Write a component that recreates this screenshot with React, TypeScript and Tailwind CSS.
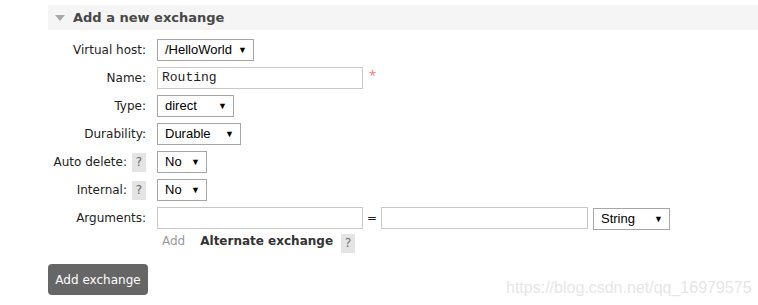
const label = 'font-["DejaVu_Sans",Verdana,sans-serif] text-[12px] text-[#222]'

function Select({ value, width }: { value: string; width: string }) {
  return (
    <div className={`${width} h-[22px] border border-[#a6a6a6] bg-white flex items-center justify-between pl-[7px] pr-[6px] font-["Liberation_Sans",Arial,sans-serif] text-[13px] text-black`}>
      <span>{value}</span>
      <span className="text-[9px] leading-none">▼</span>
    </div>
  )
}

function Help() {
  return (
    <span className="inline-flex items-center justify-center w-[14px] h-[19px] bg-[#e4e4e4] text-[#666] ml-[5px] text-[12px]">?</span>
  )
}

function Row({ name, help, children }: { name: string; help?: boolean; children: React.ReactNode }) {
  return (
    <div className="flex items-center h-[28px]">
      <div className={`w-[98px] flex items-center justify-end ${label}`}>
        <span>{name}</span>
        {help && <Help />}
      </div>
      <div className="ml-[11px] flex items-center">{children}</div>
    </div>
  )
}

export default function App() {
  return (
    <div className="w-[758px] h-[305px] bg-white relative overflow-hidden">
      <div className="pl-[48px] pt-[5px]">
        <div className="h-[25px] bg-[#f5f5f5] flex items-center">
          <span className="ml-[7px] w-0 h-0 border-l-[5px] border-r-[5px] border-t-[6px] border-l-transparent border-r-transparent border-t-[#aaa]" />
          <span className='ml-[8px] font-["DejaVu_Sans",Verdana,sans-serif] font-bold text-[13px] text-[#484848]'>Add a new exchange</span>
        </div>

        <div className="pt-[6px]">
          <Row name="Virtual host:"><Select value="/HelloWorld" width="w-[97px]" /></Row>
          <Row name="Name:">
            <div className="w-[206px] h-[22px] border border-[#c8c8c8] flex items-center pl-[4px] font-['Liberation_Mono','Courier_New',monospace] text-[13px] text-[#222]">Routing</div>
            <span className="ml-[6px] text-[#f08080] text-[13px] -mt-[4px]">*</span>
          </Row>
          <Row name="Type:"><Select value="direct" width="w-[77px]" /></Row>
          <Row name="Durability:"><Select value="Durable" width="w-[84px]" /></Row>
          <Row name="Auto delete:" help><Select value="No" width="w-[50px]" /></Row>
          <Row name="Internal:" help><Select value="No" width="w-[50px]" /></Row>
          <Row name="Arguments:">
            <div className="w-[206px] h-[22px] border border-[#c8c8c8]" />
            <span className={`mx-[4px] w-[10px] text-center ${label}`}>=</span>
            <div className="w-[207px] h-[22px] border border-[#c8c8c8]" />
            <div className="ml-[5px] mt-[2px]"><Select value="String" width="w-[77px]" /></div>
          </Row>
          <div className="flex items-center h-[18px] pl-[114px]">
            <span className='font-["DejaVu_Sans",Verdana,sans-serif] text-[12px] text-[#999]'>Add</span>
            <span className='ml-[15px] font-["DejaVu_Sans",Verdana,sans-serif] font-bold text-[12px] text-[#333]'>Alternate exchange</span>
            <span className="ml-[3px]"><Help /></span>
          </div>
        </div>

        <button className='mt-[14px] w-[100px] h-[31px] bg-[#666] rounded-[4px] text-white font-["DejaVu_Sans",Verdana,sans-serif] text-[12px]'>Add exchange</button>
      </div>

      <div className='absolute left-[506px] top-[276px] font-["Liberation_Sans",Arial,sans-serif] text-[16px] text-[#e6e6e6]'>https://blog.csdn.net/qq_16979575</div>
    </div>
  )
}
